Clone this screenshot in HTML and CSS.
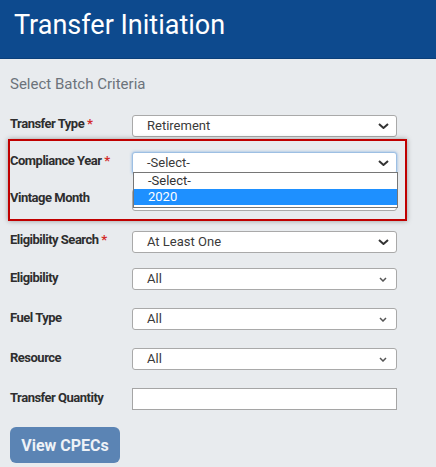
FILE: index.html
```html
<!DOCTYPE html>
<html lang="en">
<head>
<meta charset="utf-8">
<title>Transfer Initiation</title>
<link rel="stylesheet" href="styles.css">
</head>
<body>
<header class="page-header">
  <h1 class="page-title">Transfer Initiation</h1>
</header>
<main class="content">
  <p class="section-title">Select Batch Criteria</p>
  <form class="criteria">
    <div class="field">
      <label class="field-label">Transfer Type <span class="req">*</span></label>
      <div class="control">
        <span class="control-text">Retirement</span>
        <svg class="chev" width="11" height="6" viewBox="0 0 11 6"><path d="M1 1 L5.5 5 L10 1" fill="none" stroke="#333" stroke-width="2"/></svg>
      </div>
    </div>
    <div class="field">
      <label class="field-label">Compliance Year <span class="req">*</span></label>
      <div class="control control--focus">
        <span class="control-text">-Select-</span>
        <svg class="chev" width="11" height="6" viewBox="0 0 11 6"><path d="M1 1 L5.5 5 L10 1" fill="none" stroke="#333" stroke-width="2"/></svg>
        <ul class="dropdown">
          <li class="option">-Select-</li>
          <li class="option option--active">2020</li>
        </ul>
      </div>
    </div>
    <div class="field">
      <label class="field-label">Vintage Month</label>
      <div class="control">
        <span class="control-text"></span>
      </div>
    </div>
    <div class="field field--after-group">
      <label class="field-label">Eligibility Search <span class="req">*</span></label>
      <div class="control">
        <span class="control-text">At Least One</span>
        <svg class="chev" width="11" height="6" viewBox="0 0 11 6"><path d="M1 1 L5.5 5 L10 1" fill="none" stroke="#333" stroke-width="2"/></svg>
      </div>
    </div>
    <div class="field">
      <label class="field-label field-label--low">Eligibility</label>
      <div class="control">
        <span class="control-text">All</span>
        <svg class="chev chev--small" width="8" height="5" viewBox="0 0 8 5"><path d="M1 1 L4 4 L7 1" fill="none" stroke="#555" stroke-width="1.5"/></svg>
      </div>
    </div>
    <div class="field field--spaced">
      <label class="field-label field-label--low">Fuel Type</label>
      <div class="control">
        <span class="control-text">All</span>
        <svg class="chev chev--small" width="8" height="5" viewBox="0 0 8 5"><path d="M1 1 L4 4 L7 1" fill="none" stroke="#555" stroke-width="1.5"/></svg>
      </div>
    </div>
    <div class="field field--spaced">
      <label class="field-label field-label--low">Resource</label>
      <div class="control">
        <span class="control-text">All</span>
        <svg class="chev chev--small" width="8" height="5" viewBox="0 0 8 5"><path d="M1 1 L4 4 L7 1" fill="none" stroke="#555" stroke-width="1.5"/></svg>
      </div>
    </div>
    <div class="field field--spaced">
      <label class="field-label field-label--low">Transfer Quantity</label>
      <div class="control control--input"></div>
    </div>
  </form>
  <button class="btn-view" type="button">View CPECs</button>
  <div class="annotation"></div>
</main>
</body>
</html>
```

FILE: styles.css
```css
* { box-sizing: border-box; }

html, body {
  margin: 0;
  padding: 0;
}

body {
  background: #e8ebee;
  font-family: Roboto, "Liberation Sans", Arial, sans-serif;
  color: #333;
  width: 436px;
  height: 467px;
  overflow: hidden;
}

.page-header {
  background: #0d4a8e;
  height: 59px;
  padding: 8px 14px 0;
  border-bottom: 1px solid #0a3f7a;
}

.page-title {
  margin: 0;
  font-size: 27px;
  line-height: 34px;
  font-weight: 400;
  color: #fff;
}

.content {
  position: relative;
  padding: 16px 0 0 10px;
}

.section-title {
  margin: 0;
  font-size: 15px;
  line-height: 18px;
  color: #6c737b;
}

.criteria {
  margin-top: 22px;
  display: flex;
  flex-direction: column;
  gap: 15px;
}

.field {
  display: flex;
  align-items: flex-start;
}

.field--after-group { margin-top: 5px; }
.field--spaced { margin-top: 3px; }

.field-label {
  width: 122px;
  flex: none;
  font-size: 13px;
  line-height: 16px;
  font-weight: 700;
  color: #2e2e2e;
  padding-top: 1px;
  letter-spacing: -0.5px;
}

.field-label--low { padding-top: 2px; }

.req { color: #d32a2a; }

.control {
  position: relative;
  width: 265px;
  height: 22px;
  background: #fff;
  border: 1px solid #a9a9a9;
  border-radius: 3px;
  display: flex;
  align-items: center;
  justify-content: space-between;
  padding: 0 7px 0 14px;
}

.control--focus {
  border-color: #9dbfe3;
  box-shadow: 0 0 3px rgba(90, 150, 220, 0.7);
}

.control--input {
  border-radius: 0;
  border-color: #a5a5a5;
}

.control-text {
  font-size: 13px;
  line-height: 20px;
  color: #3a3a3a;
}

.chev { flex: none; }
.chev--small { margin-right: 2px; }

.dropdown {
  position: absolute;
  left: 0;
  right: -2px;
  top: 19px;
  margin: 0;
  padding: 0 0 2px;
  list-style: none;
  background: #fff;
  border: 1px solid #767676;
  z-index: 2;
}

.option {
  height: 16px;
  line-height: 16px;
  padding-left: 14px;
  font-size: 13px;
  color: #333;
}

.option--active {
  background: #1e90ff;
  color: #fff;
}

.btn-view {
  margin-top: 17px;
  width: 110px;
  height: 36px;
  border: none;
  border-radius: 6px;
  background: #5b84b4;
  color: #eef2f7;
  font-family: Roboto, "Liberation Sans", Arial, sans-serif;
  font-size: 16px;
  font-weight: 700;
  padding: 0;
}

.annotation {
  position: absolute;
  left: 8px;
  top: 80px;
  width: 399px;
  height: 82px;
  border: 2px solid #c00000;
  box-shadow: 0 0 5px rgba(0, 0, 0, 0.35);
  pointer-events: none;
  z-index: 3;
}
```
